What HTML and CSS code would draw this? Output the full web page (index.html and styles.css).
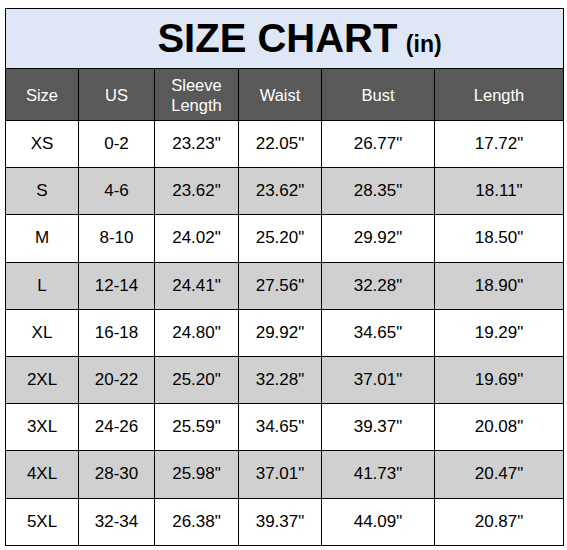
FILE: index.html
```html
<!DOCTYPE html>
<html>
<head>
<meta charset="utf-8">
<link rel="stylesheet" href="styles.css">
</head>
<body>
<table class="chart">
  <colgroup>
    <col class="c1"><col class="c2"><col class="c3"><col class="c4"><col class="c5"><col class="c6">
  </colgroup>
  <thead>
    <tr class="title-row"><th colspan="6" class="title"><span class="big">SIZE CHART</span> <span class="unit">(in)</span></th></tr>
    <tr class="head-row"><th>Size</th><th>US</th><th>Sleeve<br>Length</th><th>Waist</th><th>Bust</th><th>Length</th></tr>
  </thead>
  <tbody>
    <tr><td>XS</td><td>0-2</td><td>23.23"</td><td>22.05"</td><td>26.77"</td><td>17.72"</td></tr>
    <tr class="alt"><td>S</td><td>4-6</td><td>23.62"</td><td>23.62"</td><td>28.35"</td><td>18.11"</td></tr>
    <tr><td>M</td><td>8-10</td><td>24.02"</td><td>25.20"</td><td>29.92"</td><td>18.50"</td></tr>
    <tr class="alt"><td>L</td><td>12-14</td><td>24.41"</td><td>27.56"</td><td>32.28"</td><td>18.90"</td></tr>
    <tr><td>XL</td><td>16-18</td><td>24.80"</td><td>29.92"</td><td>34.65"</td><td>19.29"</td></tr>
    <tr class="alt"><td>2XL</td><td>20-22</td><td>25.20"</td><td>32.28"</td><td>37.01"</td><td>19.69"</td></tr>
    <tr><td>3XL</td><td>24-26</td><td>25.59"</td><td>34.65"</td><td>39.37"</td><td>20.08"</td></tr>
    <tr class="alt"><td>4XL</td><td>28-30</td><td>25.98"</td><td>37.01"</td><td>41.73"</td><td>20.47"</td></tr>
    <tr><td>5XL</td><td>32-34</td><td>26.38"</td><td>39.37"</td><td>44.09"</td><td>20.87"</td></tr>
  </tbody>
</table>
</body>
</html>
```
FILE: styles.css
```css
html, body {
  margin: 0;
  padding: 0;
  background: #ffffff;
}
body {
  padding: 8px 0 0 5px;
  font-family: "Liberation Sans", Arial, sans-serif;
}
.chart {
  border-collapse: collapse;
  table-layout: fixed;
  width: 558px;
  border: 1.5px solid #000;
}
.c1 { width: 73px; }
.c2 { width: 76px; }
.c3 { width: 84px; }
.c4 { width: 83px; }
.c5 { width: 113px; }
.c6 { width: 129px; }
.chart th, .chart td {
  border: 1px solid #000;
  padding: 0;
  text-align: center;
  vertical-align: middle;
}
.title-row th {
  height: 59px;
  background: #dfe6f5;
  color: #000;
  padding-left: 30px;
  font-weight: bold;
}
.big {
  font-size: 40px;
}
.unit {
  font-size: 23px;
  margin-left: 4px;
}
.head-row th {
  height: 51px;
  background: #595959;
  color: #ffffff;
  font-weight: normal;
  font-size: 16.5px;
  line-height: 20px;
}
.chart td {
  height: 46.2px;
  font-size: 17px;
  color: #000;
  background: #ffffff;
}
.chart tr.alt td {
  background: #d0d0d0;
}
```
